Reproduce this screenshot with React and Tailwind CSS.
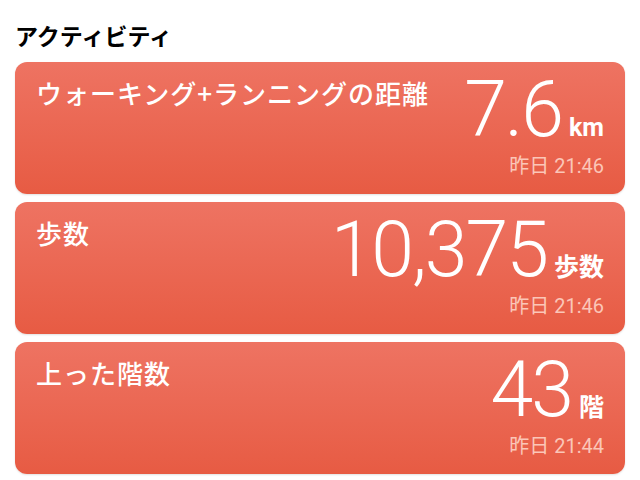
import React from "react";

// activity rows shown in the health summary
const rows = [
  { title: "ウォーキング+ランニングの距離", value: "7.6", unit: "km", time: "昨日 21:46" },
  { title: "歩数", value: "10,375", unit: "歩数", time: "昨日 21:46" },
  { title: "上った階数", value: "43", unit: "階", time: "昨日 21:44" },
];

function ActivityCard({ title, value, unit, time }) {
  return (
    <div className="h-[132px] rounded-[12px] bg-linear-to-b from-[#ee7362] to-[#e75b43] shadow-[0_1px_2px_rgba(0,0,0,0.12)] px-[21px] flex justify-between">
      <div className="pt-[15px] text-[26px] leading-[32px] font-medium text-white tracking-[1px] font-['Noto_Sans_CJK_JP',sans-serif] whitespace-nowrap">
        {title}
      </div>
      <div className="pt-[10px] flex flex-col items-end">
        <div className="flex items-baseline">
          <span className="text-[77px] leading-none font-light text-white tracking-[-2px] font-['Roboto','Noto_Sans_CJK_JP',sans-serif]">
            {value}
          </span>
          <span className="ml-[7px] text-[25px] leading-none font-bold text-white font-['Roboto','Noto_Sans_CJK_JP',sans-serif]">
            {unit}
          </span>
        </div>
        <div className="mt-[5px] text-[20px] leading-[24px] text-[#fbc6b8] font-['Roboto','Noto_Sans_CJK_JP',sans-serif]">
          {time}
        </div>
      </div>
    </div>
  );
}

export default function App() {
  return (
    <div className="w-[640px] h-[480px] bg-white overflow-hidden px-[15px]">
      <h1 className="pt-[21px] mb-[13px] text-[23px] leading-[28px] font-bold text-black font-['Noto_Sans_CJK_JP',sans-serif]">
        アクティビティ
      </h1>
      <div className="flex flex-col gap-[8px]">
        {rows.map((r) => (
          <ActivityCard key={r.title} {...r} />
        ))}
      </div>
    </div>
  );
}
